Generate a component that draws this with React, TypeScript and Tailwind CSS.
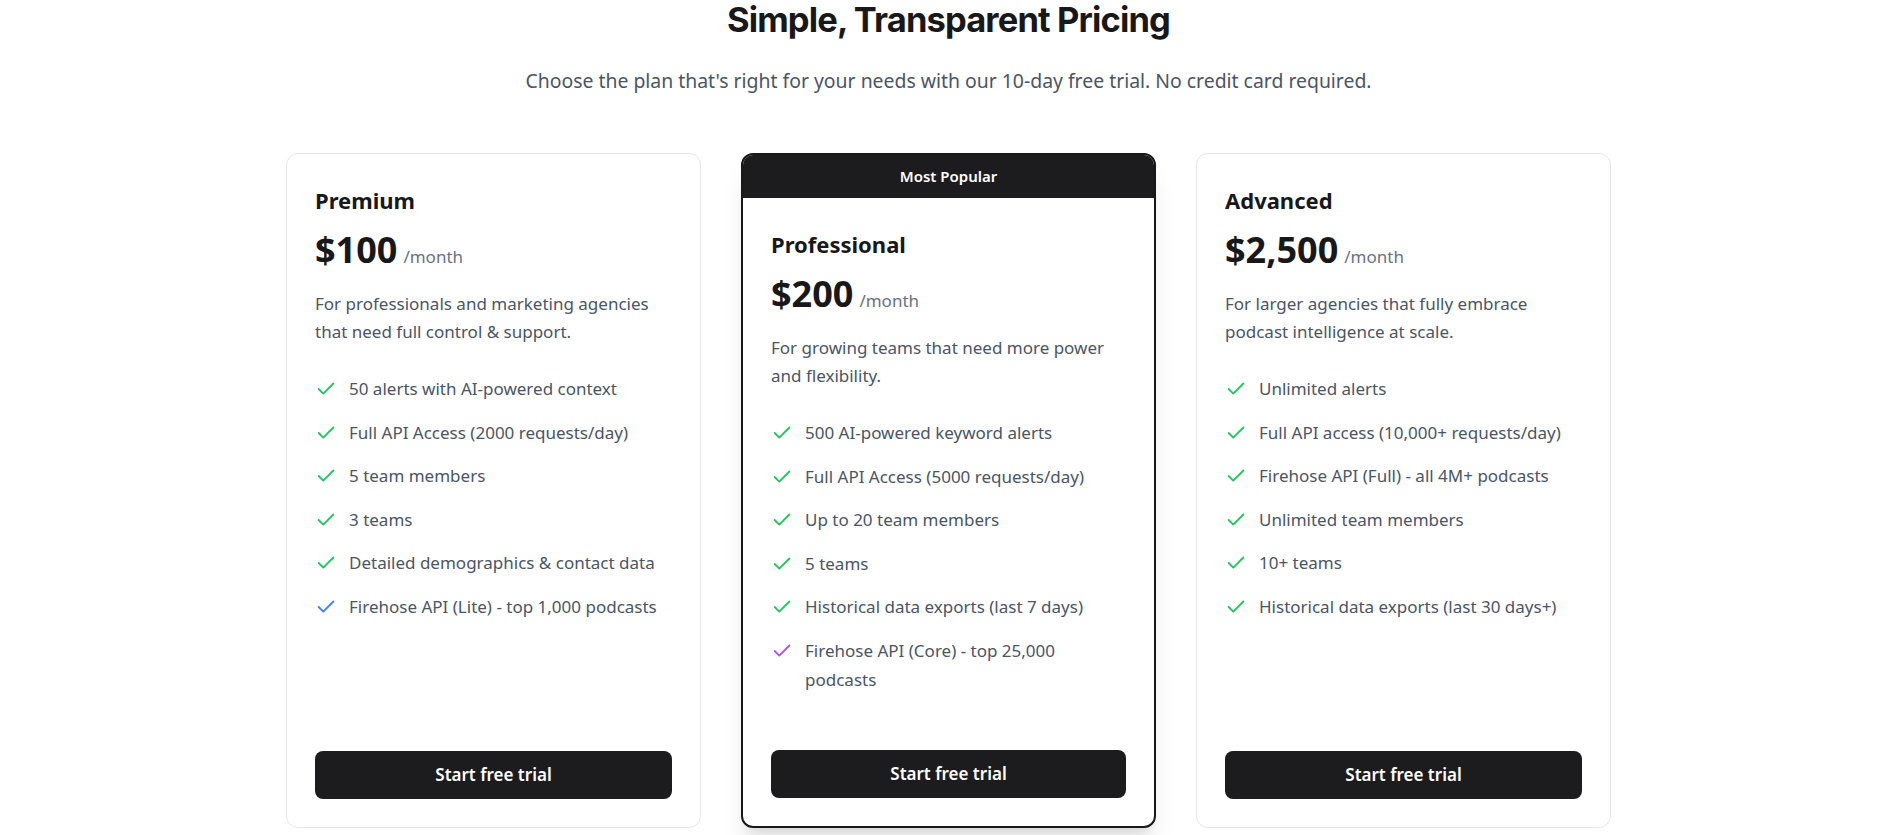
import { Check } from 'lucide-react';

type Feature = { text: string; color?: 'green' | 'blue' | 'purple' };

interface Plan {
  name: string;
  price: string;
  description: string;
  features: Feature[];
  popular?: boolean;
}

const plans: Plan[] = [
  {
    name: 'Premium',
    price: '$100',
    description: 'For professionals and marketing agencies that need full control & support.',
    features: [
      { text: '50 alerts with AI-powered context' },
      { text: 'Full API Access (2000 requests/day)' },
      { text: '5 team members' },
      { text: '3 teams' },
      { text: 'Detailed demographics & contact data' },
      { text: 'Firehose API (Lite) - top 1,000 podcasts', color: 'blue' },
    ],
  },
  {
    name: 'Professional',
    price: '$200',
    description: 'For growing teams that need more power and flexibility.',
    popular: true,
    features: [
      { text: '500 AI-powered keyword alerts' },
      { text: 'Full API Access (5000 requests/day)' },
      { text: 'Up to 20 team members' },
      { text: '5 teams' },
      { text: 'Historical data exports (last 7 days)' },
      { text: 'Firehose API (Core) - top 25,000 podcasts', color: 'purple' },
    ],
  },
  {
    name: 'Advanced',
    price: '$2,500',
    description: 'For larger agencies that fully embrace podcast intelligence at scale.',
    features: [
      { text: 'Unlimited alerts' },
      { text: 'Full API access (10,000+ requests/day)' },
      { text: 'Firehose API (Full) - all 4M+ podcasts' },
      { text: 'Unlimited team members' },
      { text: '10+ teams' },
      { text: 'Historical data exports (last 30 days+)' },
    ],
  },
];

const checkColor = {
  green: 'text-[#22c55e]',
  blue: 'text-[#3b82f6]',
  purple: 'text-[#a855f7]',
};

const PlanCard = ({ plan }: { plan: Plan }) => {
  return (
    <div
      className={
        plan.popular
          ? 'flex flex-col min-h-[675px] bg-white rounded-xl border-2 border-[#18181b] overflow-hidden shadow-xl'
          : 'flex flex-col min-h-[675px] bg-white rounded-xl border border-[#e5e7eb]'
      }
    >
      {plan.popular && (
        <div className="h-[43px] bg-[#1c1c1e] flex items-center justify-center text-white text-[15px] font-semibold">
          Most Popular
        </div>
      )}
      <div className="flex-1 flex flex-col p-7">
        <h3 className="text-[22px] leading-8 font-bold text-[#18181b] pt-0.5">{plan.name}</h3>
        <div className="mt-3.5 flex items-baseline gap-1.5">
          <span className="text-4xl leading-10 font-bold text-[#18181b]">{plan.price}</span>
          <span className="text-[17px] text-gray-500">/month</span>
        </div>
        <p className="mt-5 text-[17px] leading-7 text-gray-600">{plan.description}</p>
        <ul className="mt-[28px] flex flex-col gap-[14.5px]">
          {plan.features.map((f) => (
            <li key={f.text} className="flex items-start gap-3">
              <Check
                size={22}
                strokeWidth={2}
                className={`mt-[4px] shrink-0 ${checkColor[f.color ?? 'green']}`}
              />
              <span className="text-[17px] leading-[29px] text-gray-600">{f.text}</span>
            </li>
          ))}
        </ul>
        <button className="mt-auto h-12 w-full rounded-lg bg-[#1c1c1e] text-white text-[17px] font-semibold">
          Start free trial
        </button>
      </div>
    </div>
  );
};

export default function App() {
  return (
    <div
      className="min-h-screen bg-white pl-[9px] flex flex-col items-center"
      style={{ fontFamily: '"Noto Sans", "Open Sans", sans-serif' }}
    >
      <h1
        className="text-[34.5px] leading-10 font-bold tracking-tight text-[#18181b]"
        style={{ fontFamily: 'Inter, "Noto Sans", sans-serif' }}
      >
        Simple, Transparent Pricing
      </h1>
      <p className="mt-[27px] text-[19.4px] leading-7 text-gray-600">
        Choose the plan that's right for your needs with our 10-day free trial. No credit card required.
      </p>
      <div className="mt-[58px] w-[1325px] grid grid-cols-3 gap-10">
        {plans.map((plan) => (
          <PlanCard key={plan.name} plan={plan} />
        ))}
      </div>
    </div>
  );
}
